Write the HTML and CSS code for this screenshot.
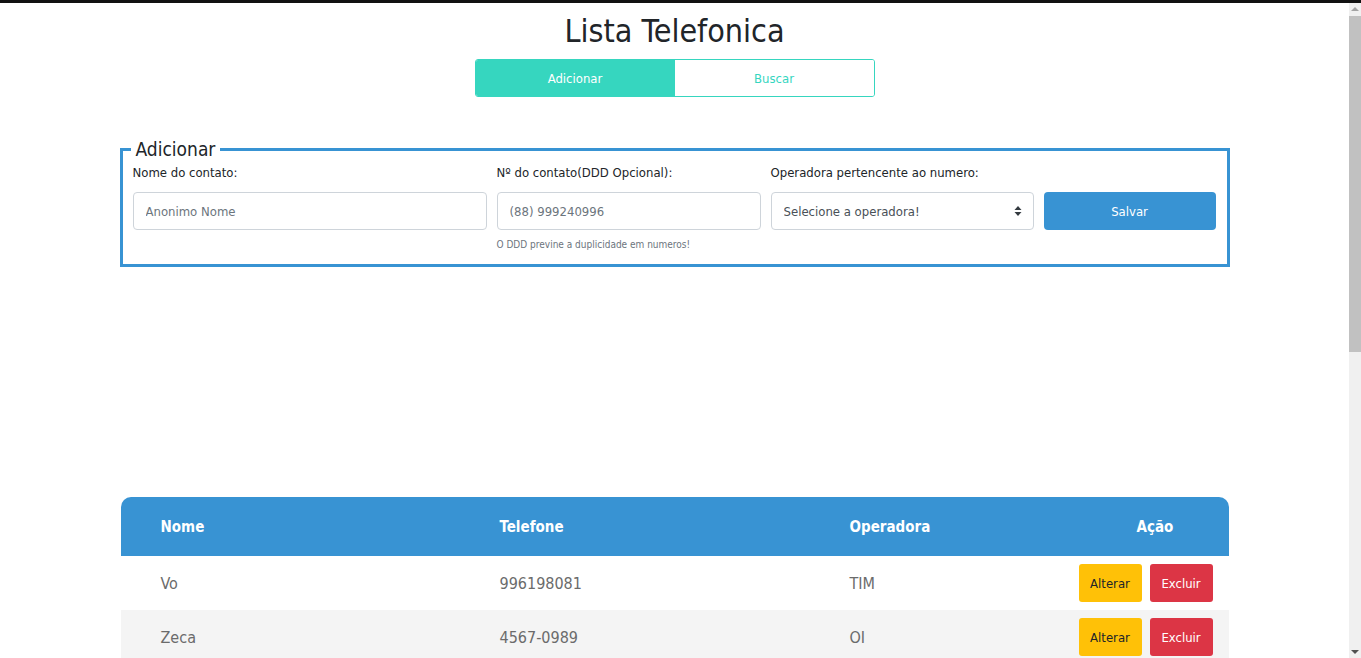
FILE: index.html
```html
<!DOCTYPE html>
<html lang="pt-BR">
<head>
<meta charset="utf-8">
<title>Lista Telefonica</title>
<link rel="stylesheet" href="styles.css">
</head>
<body>
<div class="topbar"></div>
<div class="frame">
  <main class="main">
    <h1 class="title">Lista Telefonica</h1>
    <div class="tabs">
      <button class="tab active">Adicionar</button>
      <button class="tab">Buscar</button>
    </div>

    <div class="container">
      <fieldset class="box">
        <legend class="box-legend">Adicionar</legend>
        <div class="form-grid">
          <div class="field">
            <label class="label">Nome do contato:</label>
            <input class="input" type="text" placeholder="Anonimo Nome">
          </div>
          <div class="field">
            <label class="label">Nº do contato(DDD Opcional):</label>
            <input class="input" type="text" placeholder="(88) 999240996">
            <small class="help">O DDD previne a duplicidade em numeros!</small>
          </div>
          <div class="field">
            <label class="label">Operadora pertencente ao numero:</label>
            <div class="select-wrap">
              <select class="input select">
                <option>Selecione a operadora!</option>
              </select>
              <svg class="select-arrow" width="8" height="12" viewBox="0 0 8 12"><path d="M4 1 L7.5 5 H0.5 Z M4 11 L7.5 7 H0.5 Z" fill="#343a40"/></svg>
            </div>
          </div>
          <div class="field field-btn">
            <button class="btn-save">Salvar</button>
          </div>
        </div>
      </fieldset>

      <div class="table">
        <div class="row head">
          <div class="cell">Nome</div>
          <div class="cell">Telefone</div>
          <div class="cell">Operadora</div>
          <div class="cell cell-action-head">Ação</div>
        </div>
        <div class="row">
          <div class="cell">Vo</div>
          <div class="cell">996198081</div>
          <div class="cell">TIM</div>
          <div class="cell cell-actions"><button class="btn btn-warn">Alterar</button><button class="btn btn-danger">Excluir</button></div>
        </div>
        <div class="row alt">
          <div class="cell">Zeca</div>
          <div class="cell">4567-0989</div>
          <div class="cell">OI</div>
          <div class="cell cell-actions"><button class="btn btn-warn">Alterar</button><button class="btn btn-danger">Excluir</button></div>
        </div>
      </div>
    </div>
  </main>
  <div class="scrollbar">
    <div class="sb-arrow sb-up"></div>
    <div class="sb-thumb"></div>
    <div class="sb-track"></div>
    <div class="sb-arrow sb-down"></div>
  </div>
</div>
</body>
</html>
```

FILE: styles.css
```css
* { box-sizing: border-box; }
html, body { margin: 0; padding: 0; height: 100%; overflow: hidden; }
body {
  font-family: "Liberation Sans Narrow", "DejaVu Sans Condensed", "Liberation Sans", sans-serif;
  color: #212529;
  background: #fff;
  display: flex;
  flex-direction: column;
}
.topbar { height: 3px; background: #111; flex: none; }
.frame { flex: 1; display: flex; min-height: 0; }
.main { flex: 1; overflow: hidden; }

.title {
  margin: 6px 0 0;
  text-align: center;
  font-weight: 400;
  font-size: 32px;
  line-height: 44px;
  color: #212529;
}
.tabs {
  width: 400px;
  margin: 6px auto 0;
  display: flex;
  border: 1px solid #36d6bf;
  border-radius: 3px;
  overflow: hidden;
}
.tab {
  flex: 1;
  height: 36px;
  border: 0;
  background: #fff;
  color: #36d6bf;
  font-family: inherit;
  font-size: 13px;
}
.tab.active { background: #36d6bf; color: #fff; }

.container { width: 1110px; margin: 40px auto 0; }

.box {
  margin: 0;
  border: 3px solid #3893d3;
  padding: 0 11px 13px 10px;
  min-width: 0;
}
.box-legend {
  font-size: 19px;
  line-height: 24px;
  padding: 0 5px;
  margin-left: -2px;
  color: #212529;
}
.form-grid {
  display: grid;
  grid-template-columns: 354px 264px 263px 172px;
  column-gap: 10px;
  margin-top: 3px;
}
.field { display: flex; flex-direction: column; }
.label { font-size: 13px; line-height: 18px; margin-bottom: 10px; color: #212529; }
.input {
  height: 38px;
  border: 1px solid #ced4da;
  border-radius: 4px;
  padding: 0 12px;
  font-family: inherit;
  font-size: 13px;
  color: #495057;
  background: #fff;
  width: 100%;
}
.input::placeholder { color: #6c757d; }
.help { font-size: 10px; color: #6c757d; margin-top: 8px; line-height: 13px; }
.select-wrap { position: relative; }
.select { appearance: none; -webkit-appearance: none; color: #495057; }
.select-arrow { position: absolute; right: 12px; top: 13px; }
.field-btn { justify-content: flex-start; padding-top: 28px; }
.btn-save {
  height: 38px;
  border: 0;
  border-radius: 4px;
  background: #3893d3;
  color: #fff;
  font-family: inherit;
  font-size: 13px;
}

.table { margin: 230px 1px 0; }
.row {
  display: grid;
  grid-template-columns: 339px 350px 1fr 166px;
  align-items: center;
  height: 54px;
  font-size: 16px;
  color: #6b6b6b;
}
.row.head {
  height: 59px;
  background: #3893d3;
  color: #fff;
  font-weight: 700;
  font-size: 15px;
  border-radius: 10px 10px 0 0;
}
.row.alt { background: #f4f4f4; }
.cell { padding-left: 40px; }
.cell-action-head { padding-left: 74px; }
.cell-actions { padding: 0 16px 0 0; display: flex; justify-content: flex-end; gap: 8px; }
.btn {
  width: 63px;
  height: 38px;
  border: 0;
  border-radius: 3px;
  font-family: inherit;
  font-size: 13px;
}
.btn-warn { background: #ffc107; color: #212529; }
.btn-danger { background: #dc3545; color: #fff; }

.scrollbar {
  width: 12px;
  flex: none;
  background: #f0f0f0;
  display: flex;
  flex-direction: column;
}
.sb-arrow { height: 12px; position: relative; flex: none; }
.sb-up::after, .sb-down::after {
  content: "";
  position: absolute;
  left: 2px;
  border-left: 4px solid transparent;
  border-right: 4px solid transparent;
}
.sb-up::after { top: 4px; border-bottom: 4px solid #a3a3a3; }
.sb-down::after { bottom: 4px; border-top: 4px solid #505050; }
.sb-thumb { height: 336px; background: #c1c1c1; margin: 1px 0 0; flex: none; }
.sb-track { flex: 1; }
```
